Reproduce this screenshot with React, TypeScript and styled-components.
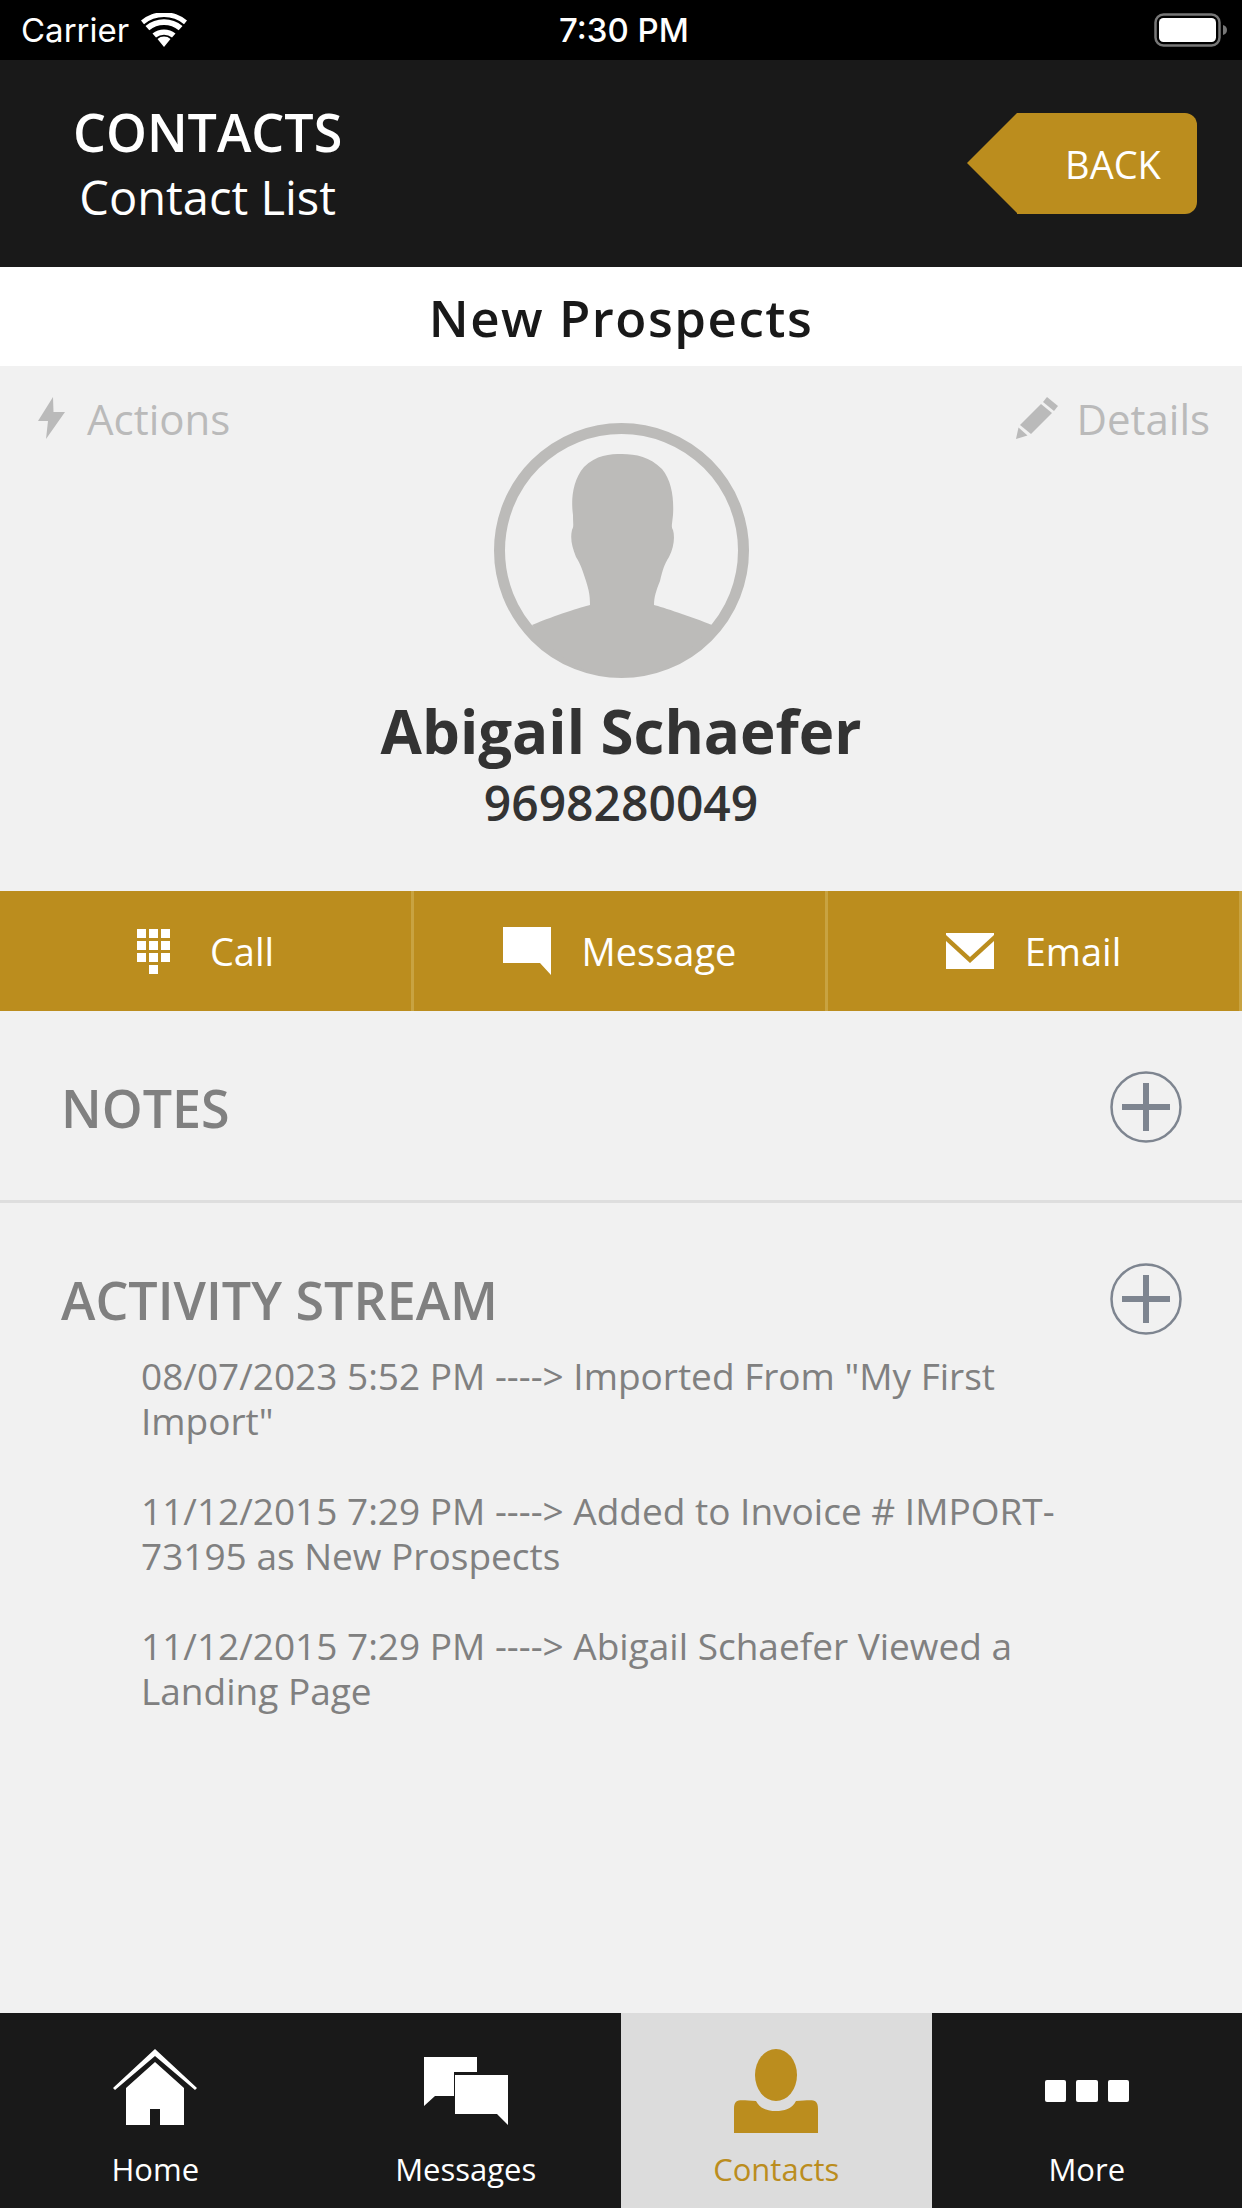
import React from 'react';
import styled, { createGlobalStyle } from 'styled-components';

const GOLD = '#bb8d1e';
const DARK = '#191919';

const GlobalStyle = createGlobalStyle`
  html, body { margin: 0; padding: 0; background: #f1f1f1; }
  * { box-sizing: border-box; }
`;

const Screen = styled.div`
  width: 1242px;
  height: 2208px;
  display: flex;
  flex-direction: column;
  overflow: hidden;
  background: #f1f1f1;
  font-family: 'Open Sans', 'Liberation Sans', sans-serif;
`;

const StatusBar = styled.div`
  height: 60px;
  flex: none;
  display: grid;
  grid-template-columns: 1fr auto 1fr;
  align-items: center;
  padding: 0 15px 0 21px;
  background: #000;
  color: #fff;
  font-family: Inter, 'Liberation Sans', sans-serif;
`;

const Carrier = styled.div`
  display: flex;
  align-items: center;
  gap: 12px;
  font-size: 33px;
`;

const Clock = styled.div`
  font-size: 33px;
  font-weight: 500;
`;

const Battery = styled.svg`
  justify-self: end;
`;

const Header = styled.header`
  height: 207px;
  flex: none;
  display: flex;
  align-items: center;
  justify-content: space-between;
  padding: 0 45px 0 73px;
  background: ${DARK};
  color: #fff;
`;

const HeaderTitles = styled.div`
  display: flex;
  flex-direction: column;
  align-items: center;
`;

const HeaderTitle = styled.div`
  font-size: 52px;
  font-weight: 600;
  line-height: 66px;
`;

const HeaderSub = styled.div`
  font-size: 47px;
  line-height: 64px;
`;

const BackButton = styled.div`
  position: relative;
  width: 180px;
  height: 101px;
  margin-left: 50px;
  display: flex;
  align-items: center;
  justify-content: center;
  padding-left: 12px;
  background: ${GOLD};
  border-radius: 0 12px 12px 0;
  font-size: 38px;
  color: #fff;

  &::before {
    content: '';
    position: absolute;
    left: -50px;
    top: 0;
    border-style: solid;
    border-width: 50.5px 50px 50.5px 0;
    border-color: transparent ${GOLD} transparent transparent;
  }
`;

const ListName = styled.div`
  height: 99px;
  flex: none;
  display: flex;
  align-items: center;
  justify-content: center;
  background: #fff;
  color: ${DARK};
  font-size: 51px;
  font-weight: 600;
  letter-spacing: 1.5px;
`;

const Profile = styled.section`
  height: 525px;
  flex: none;
  padding: 26px 32px 0 38px;
  display: flex;
  flex-direction: column;
`;

const ProfileTop = styled.div`
  display: flex;
  justify-content: space-between;
  height: 31px;
`;

const SideLink = styled.div`
  display: flex;
  align-items: center;
  height: 52px;
  gap: ${props => props.gap}px;
  color: #bababa;
  font-size: 42px;
`;

const Avatar = styled.svg`
  display: block;
  align-self: center;
  margin: 0 0 0 -6px;
  flex: none;
`;

const ContactName = styled.div`
  margin-left: -6px;
  margin-top: 12px;
  text-align: center;
  color: #333;
  font-size: 60px;
  font-weight: 700;
  line-height: 82px;
`;

const ContactPhone = styled.div`
  margin-left: -6px;
  text-align: center;
  color: #333;
  font-size: 48px;
  font-weight: 600;
  line-height: 62px;
`;

const ActionBar = styled.div`
  height: 120px;
  flex: none;
  display: grid;
  grid-template-columns: repeat(3, 414px);
  background: ${GOLD};
`;

const ActionCell = styled.div`
  display: flex;
  align-items: center;
  justify-content: center;
  gap: ${props => props.gap}px;
  border-right: 3px solid #c8a341;
  color: #fff;
  font-size: 38px;
`;

const SectionRow = styled.div`
  display: flex;
  align-items: center;
  justify-content: space-between;
  padding: 0 60px 0 61px;
`;

const NotesBlock = styled.section`
  height: 192px;
  flex: none;
  padding-top: 60px;
  border-bottom: 3px solid #dedede;
`;

const SectionTitle = styled.h2`
  margin: 0;
  color: #808080;
  font-size: 52px;
  font-weight: 600;
  line-height: 71px;
`;

const ActivityBlock = styled.section`
  flex: 1;
  padding-top: 60px;
`;

const ActivityList = styled.ul`
  list-style: none;
  margin: 18px 0 0;
  padding: 0 150px 0 141px;
`;

const ActivityItem = styled.li`
  margin-bottom: 45px;
  color: #808080;
  font-size: 37px;
  line-height: 45px;
`;

const TabBar = styled.nav`
  height: 195px;
  flex: none;
  display: grid;
  grid-template-columns: repeat(4, 1fr);
  background: ${DARK};
`;

const Tab = styled.div`
  position: relative;
  display: flex;
  flex-direction: column;
  align-items: center;
  background: ${props => (props.active ? '#dcdcdc' : 'transparent')};
  color: ${props => (props.active ? GOLD : '#fff')};
  font-size: 31px;
`;

const TabIcon = styled.div`
  height: 135px;
  display: flex;
  align-items: flex-end;
  padding-bottom: ${props => props.bottom}px;
`;

const TabLabel = styled.div`
  line-height: 42px;
`;

const ACTIVITY = [
  '08/07/2023 5:52 PM ----> Imported From "My First Import"',
  '11/12/2015 7:29 PM ----> Added to Invoice # IMPORT-73195 as New Prospects',
  '11/12/2015 7:29 PM ----> Abigail Schaefer Viewed a Landing Page',
];

const PlusCircle = () => (
  <svg width="72" height="72" viewBox="0 0 72 72">
    <circle cx="36" cy="36" r="34.5" fill="none" stroke="#7e8590" strokeWidth="2.5" />
    <path d="M12 33h48v6H12z" fill="#7e8590" />
    <path d="M33 12h6v48h-6z" fill="#7e8590" />
  </svg>
);

const DialIcon = () => (
  <svg width="33" height="45" viewBox="0 0 33 45" fill="#fff">
    {[0, 12, 24].flatMap(y =>
      [0, 12, 24].map(x => <rect key={`${x}-${y}`} x={x} y={y} width="9" height="9" />),
    )}
    <rect x="12" y="36" width="9" height="9" />
  </svg>
);

export default function App() {
  return (
    <Screen>
      <GlobalStyle />
      <StatusBar>
        <Carrier>
          Carrier
          <svg width="46" height="34" viewBox="0 0 46 34" fill="#fff">
            <path d="M23 34l-6.500-8a10 10 0 0 1 13 0z" />
            <path d="M11.500 20.500l3.500 4a13 13 0 0 1 16 0l3.500-4a18.500 18.500 0 0 0-23 0z" />
            <path d="M4.500 13l3.800 4.300a23 23 0 0 1 29.400 0L41.500 13a29 29 0 0 0-37 0z" />
            <path d="M0 7.500l3 3.700a31 31 0 0 1 40 0l3-3.700a36 36 0 0 0-46 0z" />
          </svg>
        </Carrier>
        <Clock>7:30 PM</Clock>
        <Battery width="73" height="34" viewBox="0 0 73 34">
          <rect x="1.500" y="1.500" width="64" height="31" rx="8" fill="none" stroke="#777" strokeWidth="2.500" />
          <rect x="5" y="5" width="57" height="24" rx="4.500" fill="#fff" />
          <path d="M69 12c2.500.8 4 2.500 4 5s-1.500 4.200-4 5z" fill="#777" />
        </Battery>
      </StatusBar>

      <Header>
        <HeaderTitles>
          <HeaderTitle>CONTACTS</HeaderTitle>
          <HeaderSub>Contact List</HeaderSub>
        </HeaderTitles>
        <BackButton>BACK</BackButton>
      </Header>

      <ListName>New Prospects</ListName>

      <Profile>
        <ProfileTop>
          <SideLink gap={22}>
            <svg width="27" height="42" viewBox="0 0 27 42" fill="#bababa">
              <path d="M15 0L0 24h10L8 42l19-27H15.500z" />
            </svg>
            Actions
          </SideLink>
          <SideLink gap={18}>
            <svg width="42" height="42" viewBox="0 0 42 42" fill="#bababa">
              <path d="M31 0l11 9-4 5-11-9z" />
              <path d="M25 7l11 9-21 21-11-9z" />
              <path d="M2.500 30.500l9 8L0 42z" />
            </svg>
            Details
          </SideLink>
        </ProfileTop>
        <Avatar width="255" height="255" viewBox="0 0 255 255">
          <circle cx="127.500" cy="127.500" r="122" fill="none" stroke="#bcbbb9" strokeWidth="11" />
          <path
            fill="#bcbbb9"
            d="M38 202C62 192 88 184 96 182C96 172 95 168 92 158C88 146 87 142 82 134C78 124 76 116 78 107C80 103 79 102 79 92C77 78 78 58 90 44C102 32 116 31 128 31C142 31 156 34 168 46C178 58 180 76 179 92C178 102 177 104 179 107C181 114 180 124 175 134C170 142 169 146 166 158C162 168 160 174 160 182C168 184 198 194 218 202C192 236 160 254 127 254C94 254 62 236 38 202Z"
          />
        </Avatar>
        <ContactName>Abigail Schaefer</ContactName>
        <ContactPhone>9698280049</ContactPhone>
      </Profile>

      <ActionBar>
        <ActionCell gap={40}>
          <DialIcon />
          Call
        </ActionCell>
        <ActionCell gap={31}>
          <svg width="48" height="48" viewBox="0 0 48 48" fill="#fff">
            <path d="M0 0h48v48l-11-12H0z" />
          </svg>
          Message
        </ActionCell>
        <ActionCell gap={31}>
          <svg width="48" height="36" viewBox="0 0 48 36" fill="#fff">
            <path d="M0 0h48v2L24 24 0 2z" />
            <path d="M0 8l24 22L48 8v28H0z" />
          </svg>
          Email
        </ActionCell>
      </ActionBar>

      <NotesBlock>
        <SectionRow>
          <SectionTitle>NOTES</SectionTitle>
          <PlusCircle />
        </SectionRow>
      </NotesBlock>

      <ActivityBlock>
        <SectionRow>
          <SectionTitle>ACTIVITY STREAM</SectionTitle>
          <PlusCircle />
        </SectionRow>
        <ActivityList>
          {ACTIVITY.map(line => (
            <ActivityItem key={line}>{line}</ActivityItem>
          ))}
        </ActivityList>
      </ActivityBlock>

      <TabBar>
        <Tab>
          <TabIcon bottom={23}>
            <svg width="84" height="76" viewBox="0 0 84 76" fill="#fff">
              <path d="M42 0L84 39l-2 2L42 7 2 41l-2-2z" />
              <path d="M42 13L71 39v37H47V60H37v16H13V39z" />
            </svg>
          </TabIcon>
          <TabLabel>Home</TabLabel>
        </Tab>
        <Tab>
          <TabIcon bottom={23}>
            <svg width="84" height="68" viewBox="0 0 84 68" fill="#fff">
              <path d="M0 0h53v15H30v24H11l-11 10z" />
              <path d="M31 18h53v50L73 57H31z" />
            </svg>
          </TabIcon>
          <TabLabel>Messages</TabLabel>
        </Tab>
        <Tab active>
          <TabIcon bottom={15}>
            <svg width="84" height="84" viewBox="0 0 84 84" fill={GOLD}>
              <ellipse cx="42" cy="26" rx="21" ry="26" />
              <path d="M0 84V60C0 48 8 52 22 52c4 8 12 10 20 10s16-2 20-10c14 0 22-4 22 8v24z" />
            </svg>
          </TabIcon>
          <TabLabel>Contacts</TabLabel>
        </Tab>
        <Tab>
          <TabIcon bottom={46}>
            <svg width="84" height="22" viewBox="0 0 84 22" fill="#fff">
              <rect width="21" height="22" rx="2" />
              <rect x="31" width="22" height="22" rx="2" />
              <rect x="63" width="21" height="22" rx="2" />
            </svg>
          </TabIcon>
          <TabLabel>More</TabLabel>
        </Tab>
      </TabBar>
    </Screen>
  );
}
